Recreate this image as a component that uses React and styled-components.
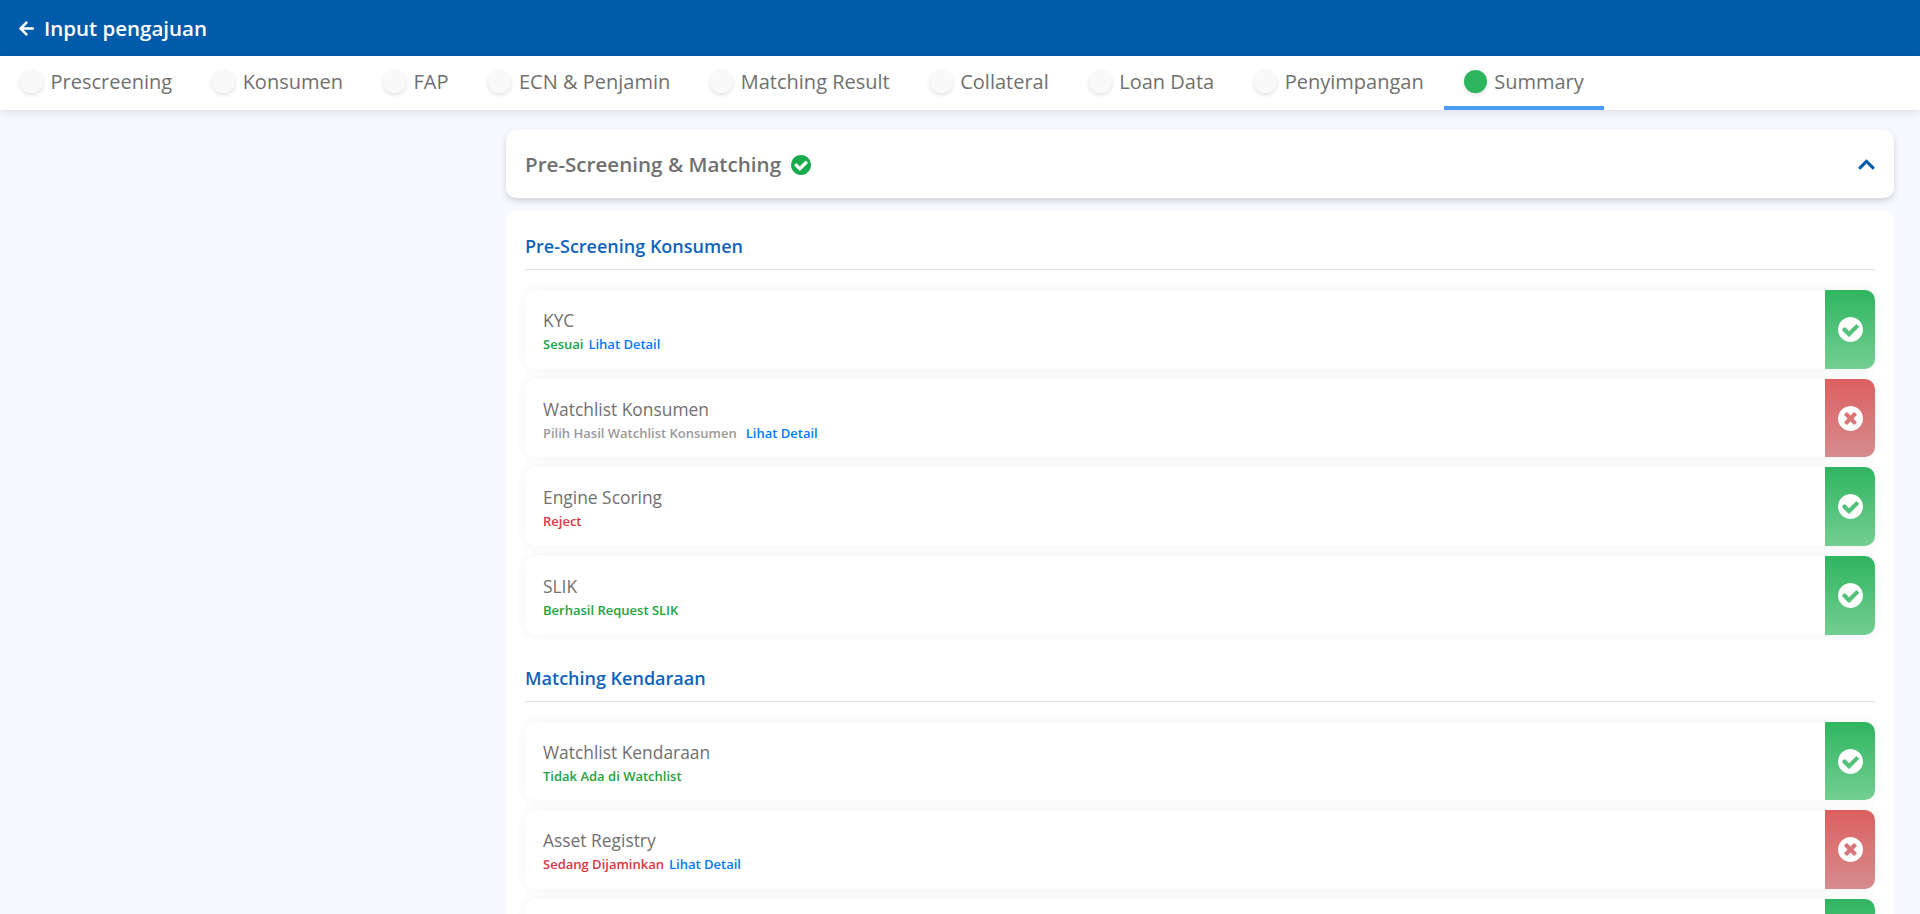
import styled, { createGlobalStyle } from 'styled-components';
import { FaArrowLeft, FaChevronUp } from 'react-icons/fa';

const tabs = ['Prescreening', 'Konsumen', 'FAP', 'ECN & Penjamin', 'Matching Result', 'Collateral', 'Loan Data', 'Penyimpangan', 'Summary'];

const konsumen = [
    { title: 'KYC', note: 'Sesuai', tone: 'green', detail: true, ok: true },
    { title: 'Watchlist Konsumen', note: 'Pilih Hasil Watchlist Konsumen', tone: 'grey', detail: true, wide: true, ok: false },
    { title: 'Engine Scoring', note: 'Reject', tone: 'red', ok: true },
    { title: 'SLIK', note: 'Berhasil Request SLIK', tone: 'green', ok: true },
];

const kendaraan = [
    { title: 'Watchlist Kendaraan', note: 'Tidak Ada di Watchlist', tone: 'green', ok: true },
    { title: 'Asset Registry', note: 'Sedang Dijaminkan', tone: 'red', detail: true, ok: false },
    { title: '', note: '', tone: 'green', ok: true },
];

const CIRCLE = 'q0 209-103 385.5t-279.5 279.5-385.5 103-385.5-103-279.5-279.5-103-385.5 103-385.5 279.5-279.5 385.5-103 385.5 103 279.5 279.5 103 385.5z';

function CheckIcon() {
    return (
        <svg viewBox="128 128 1536 1536" fill="currentColor">
            <path d={`M1412 734q0-28-18-46l-91-90q-19-19-45-19t-45 19l-408 407-226-226q-19-19-45-19t-45 19l-91 90q-18 18-18 46 0 27 18 45l362 362q19 19 45 19 27 0 46-19l543-543q18-18 18-45zm252 162${CIRCLE}`} />
        </svg>
    )
}

function CrossIcon() {
    return (
        <svg viewBox="128 128 1536 1536" fill="currentColor">
            <path d={`M1277 1122q0-26-19-45l-181-181 181-181q19-19 19-45 0-27-19-46l-90-90q-19-19-46-19-26 0-45 19l-181 181-181-181q-19-19-45-19-27 0-46 19l-90 90q-19 19-19 46 0 26 19 45l181 181-181 181q-19 19-19 45 0 27 19 46l90 90q19 19 46 19 26 0 45-19l181-181 181 181q19 19 45 19 27 0 46-19l90-90q19-19 19-46zm387-226${CIRCLE}`} />
        </svg>
    )
}

function Row({ title, note, tone, detail, wide, ok }) {
    return (
        <RowCard>
            <RowBody>
                <RowTitle>{title}</RowTitle>
                <RowNote>
                    <NoteText tone={tone}>{note}</NoteText>
                    {detail && <DetailLink wide={wide}>Lihat Detail</DetailLink>}
                </RowNote>
            </RowBody>
            <Status ok={ok}>
                {ok ? <CheckIcon /> : <CrossIcon />}
            </Status>
        </RowCard>
    )
}

function App () {
    return (
        <Page>
            <GlobalStyle />
            <Header>
                <FaArrowLeft size={17} />
                <HeaderTitle>Input pengajuan</HeaderTitle>
            </Header>
            <TabBar>
                {tabs.map(tab => (
                    <Tab key={tab} active={tab === 'Summary'}>
                        <TabDot active={tab === 'Summary'} />
                        {tab}
                    </Tab>
                ))}
            </TabBar>
            <Main>
                <Content>
                    <Accordion>
                        <AccordionTitle>
                            Pre-Screening &amp; Matching
                            <CheckIcon />
                        </AccordionTitle>
                        <Chevron><FaChevronUp /></Chevron>
                    </Accordion>
                    <Panel>
                        <SectionTitle>Pre-Screening Konsumen</SectionTitle>
                        {konsumen.map(item => <Row key={item.title} {...item} />)}
                        <SectionTitle next>Matching Kendaraan</SectionTitle>
                        {kendaraan.map(item => <Row key={item.title} {...item} />)}
                    </Panel>
                </Content>
            </Main>
        </Page>
    )
}

export default App;

const GlobalStyle = createGlobalStyle`
    html, body {
        margin: 0;
        height: 100%;
        overflow: hidden;
    }

    * {
        box-sizing: border-box;
    }
`

const Page = styled.div`
    height: 100vh;
    display: flex;
    flex-direction: column;
    overflow: hidden;
    background: #f6f9fe;
    font-family: "Open Sans", sans-serif;
`

const Header = styled.header`
    flex: none;
    height: 56px;
    padding: 0 18px;
    display: flex;
    align-items: center;
    gap: 9px;
    background: #005cab;
    color: #fff;
`

const HeaderTitle = styled.div`
    font-size: 20.5px;
    font-weight: 600;
`

const TabBar = styled.nav`
    flex: none;
    position: relative;
    height: 54px;
    display: flex;
    background: #fff;
    box-shadow: 0 2px 10px rgba(0, 0, 0, .12);
`

const Tab = styled.div`
    height: 100%;
    padding: 0 20px;
    display: flex;
    align-items: center;
    gap: 7.5px;
    font-size: 20px;
    color: #707070;
    border-bottom: 4px solid ${props => props.active ? '#4a9cf5' : 'transparent'};
`

const TabDot = styled.span`
    width: 23px;
    height: 23px;
    border-radius: 50%;
    background: ${props => props.active ? '#2db55d' : '#f9f9f9'};
    box-shadow: 0 2px 4px rgba(0, 0, 0, .12);
`

const Main = styled.main`
    flex: 1;
    min-height: 0;
    padding: 20px 26px 0 506px;
    overflow: hidden;
`

const Content = styled.div`
    display: flex;
    flex-direction: column;
    gap: 12px;
`

const Accordion = styled.div`
    height: 68px;
    padding: 0 19px;
    display: flex;
    align-items: center;
    justify-content: space-between;
    background: #fff;
    border-radius: 10px;
    box-shadow: 0 3px 6px rgba(0, 0, 0, .16);
`

const AccordionTitle = styled.div`
    display: flex;
    align-items: center;
    gap: 10px;
    font-size: 20.6px;
    font-weight: 600;
    color: #707070;

    svg {
        width: 20px;
        height: 20px;
        margin-top: 1px;
        color: #17ab4e;
    }
`

const Chevron = styled.div`
    display: flex;
    color: #005cab;

    svg {
        width: 17px;
        height: 19px;
    }
`

const Panel = styled.section`
    padding: 19px;
    background: #fff;
    border-radius: 10px;
`

const SectionTitle = styled.h2`
    margin: ${props => props.next ? '26px' : '0'} 0 20px;
    padding-bottom: 6px;
    font-size: 18px;
    line-height: 34px;
    font-weight: 600;
    color: #0f63bd;
    border-bottom: 1px solid #e3e3e3;
`

const RowCard = styled.div`
    height: 78.7px;
    margin-bottom: 10px;
    display: flex;
    background: #fff;
    border-radius: 10px;
    box-shadow: 0 0 12px rgba(0, 0, 0, .06);
`

const RowBody = styled.div`
    flex: 1;
    padding: 18px;
`

const RowTitle = styled.div`
    font-size: 17.4px;
    line-height: 24px;
    color: #707070;
`

const RowNote = styled.div`
    display: flex;
    margin-top: 3px;
    font-size: 13px;
    line-height: 18px;
    font-weight: 600;
`

const noteColors = {
    green: '#22a33f',
    red: '#dc3545',
    grey: '#9a9a9a',
}

const NoteText = styled.span`
    color: ${props => noteColors[props.tone]};
`

const DetailLink = styled.span`
    margin-left: ${props => props.wide ? '9px' : '5px'};
    color: #007bff;
`

const Status = styled.div`
    flex: none;
    width: 50px;
    display: flex;
    align-items: center;
    justify-content: center;
    border-radius: 0 10px 10px 0;
    color: #fff;
    background: ${props => props.ok
        ? 'linear-gradient(#2fb55f, #74ce92)'
        : 'linear-gradient(#dd5f5f, #d58c8e)'};

    svg {
        width: 25px;
        height: 25px;
    }
`
